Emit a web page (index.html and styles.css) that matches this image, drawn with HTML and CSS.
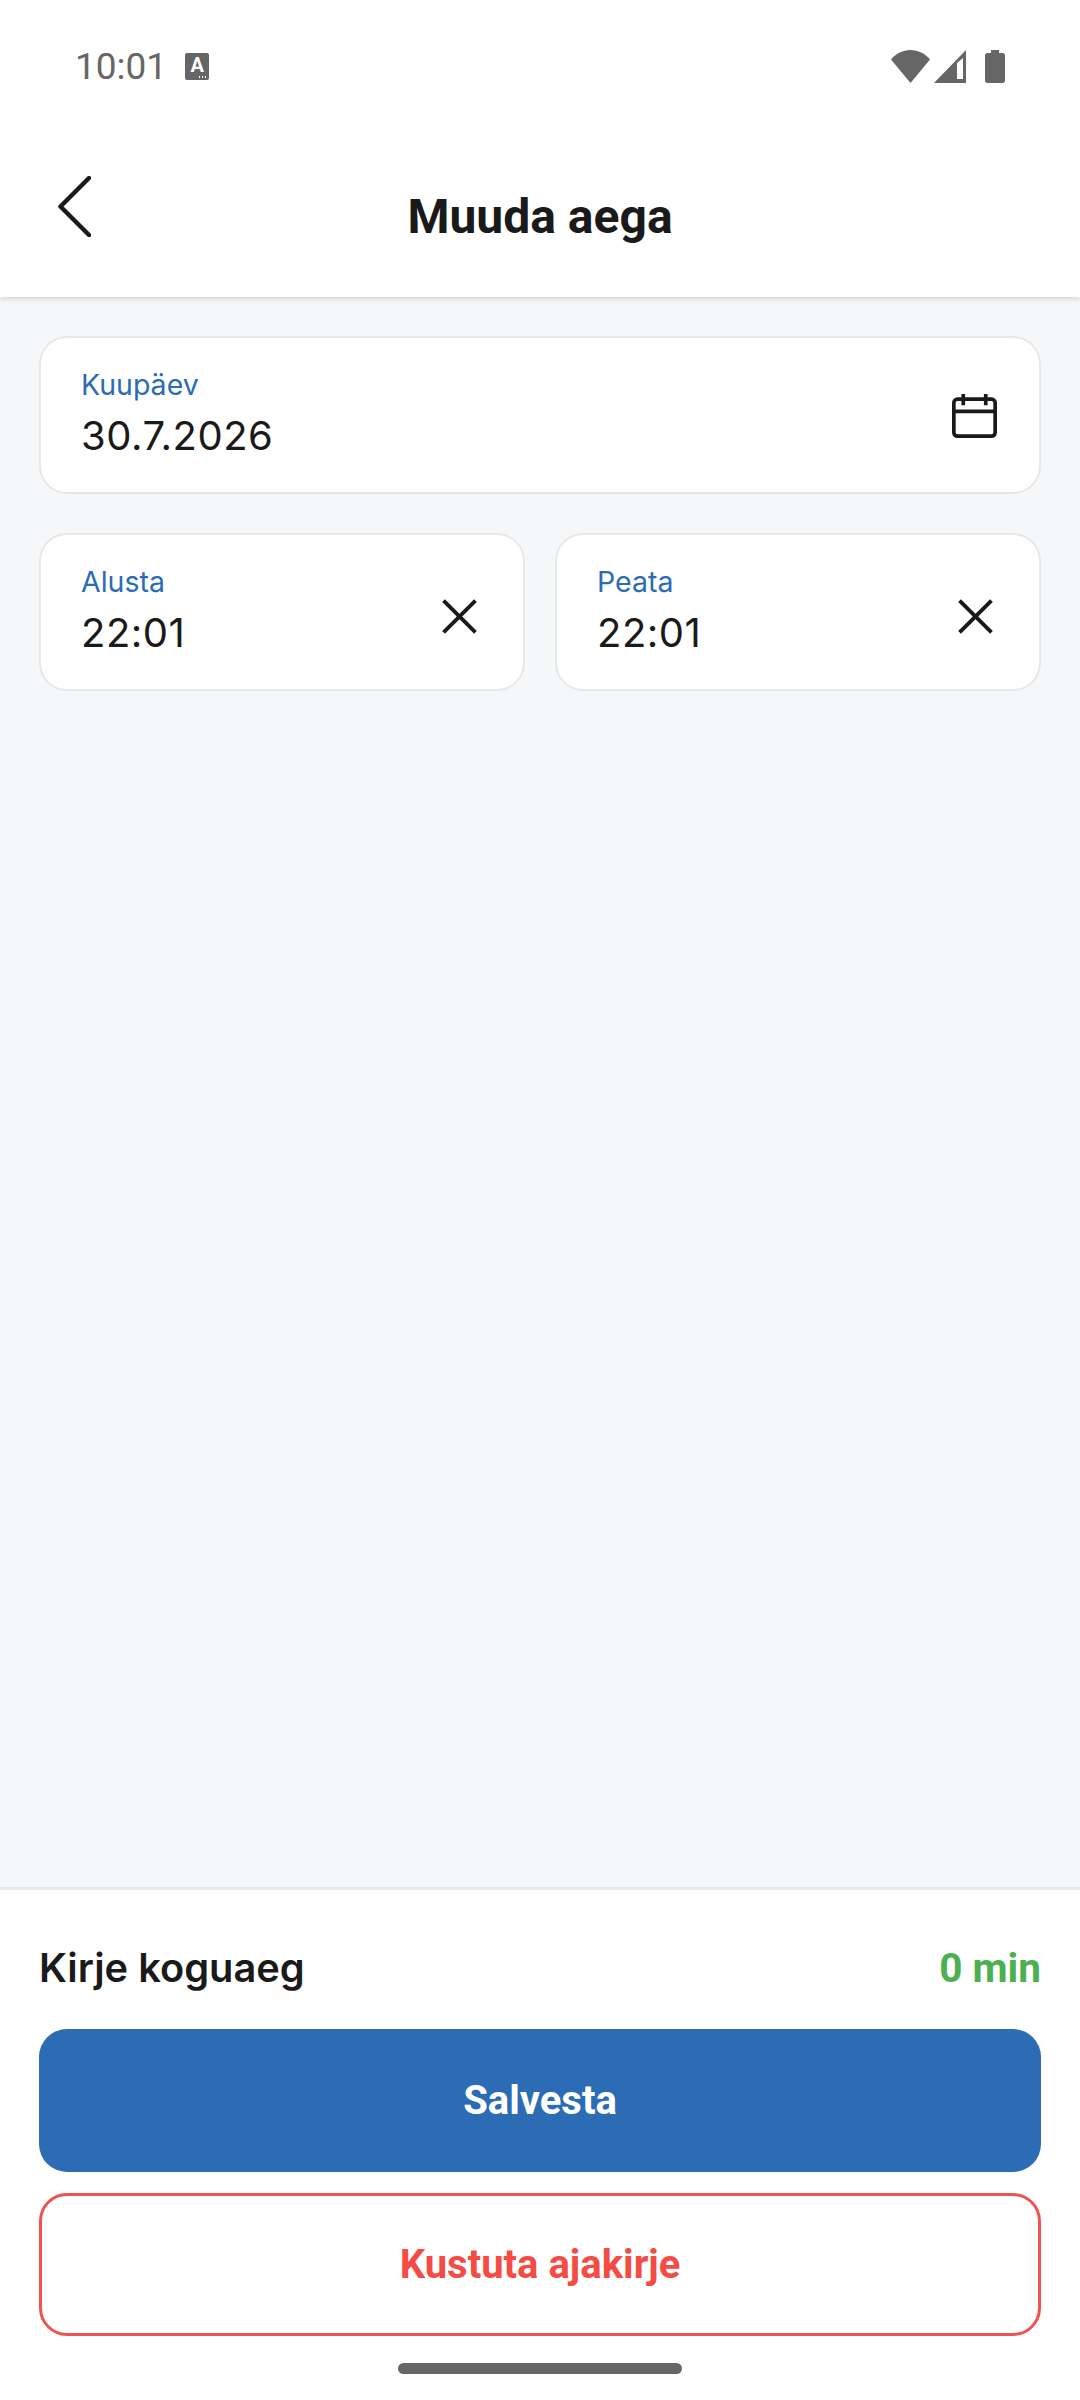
FILE: index.html
```html
<!DOCTYPE html>
<html lang="et">
<head>
    <meta charset="UTF-8">
    <meta name="viewport" content="width=device-width, initial-scale=1.0">
    <title>Muuda aega</title>
    <link rel="stylesheet" href="styles.css">
</head>
<body>
    <div class="page">
        <header class="top">
            <div class="status-bar">
                <div class="status-left">
                    <span class="clock">10:01</span>
                    <span class="notice-icon">A<i class="notice-dots"></i></span>
                </div>
                <div class="status-right">
                    <svg class="wifi-icon" viewBox="0 0 39 33"><path d="M0 9.500C5 3.500 12 0 19.500 0S34 3.500 39 9.500L19.500 33Z"/></svg>
                    <svg class="signal-icon" viewBox="0 0 32 33"><path fill-rule="evenodd" d="M32 0V33H0ZM23 13V29H29V8Z"/></svg>
                    <svg class="battery-icon" viewBox="0 0 20 33"><path d="M6 0H14V3H17.500C19 3 20 4 20 5.500V30.500C20 32 19 33 17.500 33H2.500C1 33 0 32 0 30.500V5.500C0 4 1 3 2.500 3H6Z"/></svg>
                </div>
            </div>
            <div class="title-bar">
                <button class="back-button" aria-label="Tagasi">
                    <svg viewBox="0 0 33 61"><path d="M31 2 2.500 30.500 31 59"/></svg>
                </button>
                <h1 class="title">Muuda aega</h1>
            </div>
        </header>

        <main class="content">
            <div class="field">
                <div class="field-text">
                    <span class="field-label">Kuupäev</span>
                    <span class="field-value">30.7.2026</span>
                </div>
                <svg class="calendar-icon" viewBox="0 0 44 44">
                    <rect x="1.800" y="6" width="40.400" height="36.200" rx="3.500"/>
                    <path d="M1.800 18H42.200M11 1V12M33 1V12"/>
                </svg>
            </div>
            <div class="time-row">
                <div class="field">
                    <div class="field-text">
                        <span class="field-label">Alusta</span>
                        <span class="field-value">22:01</span>
                    </div>
                    <svg class="clear-icon" viewBox="0 0 34 34"><path d="M1.500 1.500 32.500 32.500M32.500 1.500 1.500 32.500"/></svg>
                </div>
                <div class="field">
                    <div class="field-text">
                        <span class="field-label">Peata</span>
                        <span class="field-value">22:01</span>
                    </div>
                    <svg class="clear-icon" viewBox="0 0 34 34"><path d="M1.500 1.500 32.500 32.500M32.500 1.500 1.500 32.500"/></svg>
                </div>
            </div>
        </main>

        <footer class="bottom">
            <div class="total-row">
                <span class="total-label">Kirje koguaeg</span>
                <span class="total-value">0 min</span>
            </div>
            <button class="btn btn-save">Salvesta</button>
            <button class="btn btn-delete">Kustuta ajakirje</button>
            <div class="nav-pill"></div>
        </footer>
    </div>
</body>
</html>
```

FILE: styles.css
```css
* {
    box-sizing: border-box;
}

body {
    margin: 0;
    background-color: #f6f7f9;
    color: #1a1a1a;
    font-family: Inter, sans-serif;
}

.page {
    display: flex;
    flex-direction: column;
    height: 2400px;
}

.top {
    height: 297px;
    background-color: #fff;
    box-shadow: 0 2px 6px rgba(0, 0, 0, 0.14);
}

.status-bar {
    display: flex;
    justify-content: space-between;
    align-items: center;
    height: 132px;
    padding: 0 75px 0 75px;
}

.status-left {
    display: flex;
    align-items: center;
    gap: 18px;
}

.clock {
    font-family: Roboto, sans-serif;
    font-size: 37px;
    color: #666;
}

.notice-icon {
    position: relative;
    display: flex;
    justify-content: center;
    width: 24px;
    height: 27px;
    padding-top: 3px;
    background-color: #666;
    border-radius: 2px;
    color: #fff;
    font-family: Roboto, sans-serif;
    font-size: 20px;
    font-weight: 700;
    line-height: 18px;
}

.notice-dots {
    position: absolute;
    right: 2px;
    bottom: 2px;
    width: 9px;
    height: 2px;
    background-image: radial-gradient(circle, #fff 1px, transparent 1px);
    background-size: 3px 2px;
}

.status-right {
    display: flex;
    align-items: center;
}

.status-right svg {
    display: block;
    height: 33px;
    fill: #666;
}

.wifi-icon {
    width: 39px;
}

.signal-icon {
    width: 32px;
    margin-left: 4px;
}

.battery-icon {
    width: 20px;
    margin-left: 19px;
}

.title-bar {
    display: flex;
    justify-content: center;
    height: 165px;
    position: relative;
}

.back-button {
    position: absolute;
    left: 58px;
    top: 44px;
    padding: 0;
    border: none;
    background: none;
}

.back-button svg {
    display: block;
    width: 33px;
    height: 61px;
    fill: none;
    stroke: #1a1a1a;
    stroke-width: 4.5;
    stroke-linecap: round;
    stroke-linejoin: round;
}

.title {
    margin: 2px 0 0;
    font-family: Roboto, sans-serif;
    font-size: 48px;
    font-weight: 700;
    line-height: 165px;
}

.content {
    flex: 1;
    display: flex;
    flex-direction: column;
    gap: 39px;
    padding: 39px 39px 0;
}

.time-row {
    display: grid;
    grid-template-columns: 1fr 1fr;
    gap: 30px;
}

.field {
    display: flex;
    justify-content: space-between;
    align-items: center;
    height: 158px;
    padding: 0 46px 0 40px;
    background-color: #fff;
    border: 2px solid #e6e7e9;
    border-radius: 28px;
}

.field-text {
    display: flex;
    flex-direction: column;
    padding-bottom: 2px;
}

.field-label {
    color: #2b6cb5;
    font-size: 28.500px;
    line-height: 34px;
}

.field-value {
    margin-top: 10px;
    font-size: 40px;
    line-height: 48px;
    letter-spacing: 0.5px;
}

.calendar-icon {
    width: 45px;
    height: 45px;
    margin-right: -4px;
    fill: none;
    stroke: #1a1a1a;
    stroke-width: 3.600;
}

.clear-icon {
    width: 35px;
    height: 35px;
    margin-top: 9px;
    fill: none;
    stroke: #1a1a1a;
    stroke-width: 3.800;
}

.bottom {
    display: flex;
    flex-direction: column;
    height: 513px;
    padding: 0 39px;
    background-color: #fff;
    border-top: 3px solid #e8e9eb;
}

.total-row {
    display: flex;
    justify-content: space-between;
    align-items: center;
    height: 139px;
    padding-top: 16px;
}

.total-label {
    font-size: 39.800px;
    font-weight: 600;
}

.total-value {
    color: #4caf50;
    font-family: Roboto, sans-serif;
    font-size: 40.500px;
    font-weight: 700;
}

.btn {
    flex: none;
    height: 143px;
    border-radius: 28px;
    font-family: Roboto, sans-serif;
    font-size: 40px;
    font-weight: 700;
}

.btn-save {
    background-color: #2b6cb5;
    border: none;
    color: #fff;
}

.btn-delete {
    margin-top: 21px;
    background-color: #fff;
    border: 3px solid #ef5350;
    color: #f44c44;
}

.nav-pill {
    flex: none;
    align-self: center;
    width: 284px;
    height: 11px;
    margin-top: 27px;
    background-color: #666;
    border-radius: 6px;
}
```
